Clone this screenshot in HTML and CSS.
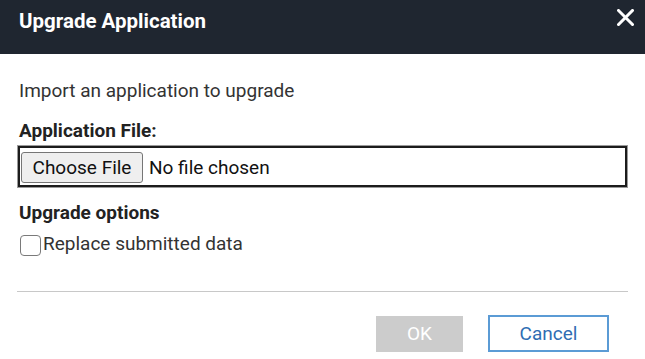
FILE: index.html
```html
<!DOCTYPE html>
<html lang="en">
<head>
<meta charset="utf-8">
<title>Upgrade Application</title>
<link rel="stylesheet" href="styles.css">
</head>
<body>
<div class="dialog">
  <div class="header">
    <div class="title">Upgrade Application</div>
    <svg class="close" width="17" height="17" viewBox="0 0 17 17" aria-label="Close">
      <path d="M1.5 1.5 L15.5 15.5 M15.5 1.5 L1.5 15.5" stroke="#ffffff" stroke-width="3" stroke-linecap="square"/>
    </svg>
  </div>
  <div class="content">
    <p class="intro">Import an application to upgrade</p>
    <div class="label label-file">Application File:</div>
    <div class="file-box">
      <span class="file-btn">Choose File</span>
      <span class="file-name">No file chosen</span>
    </div>
    <div class="label label-options">Upgrade options</div>
    <label class="check-row">
      <span class="checkbox"></span>
      <span class="check-text">Replace submitted data</span>
    </label>
    <div class="divider"></div>
    <div class="footer">
      <span class="btn btn-ok">OK</span>
      <span class="btn btn-cancel">Cancel</span>
    </div>
  </div>
</div>
</body>
</html>
```

FILE: styles.css
```css
html, body {
  margin: 0;
  padding: 0;
  background: #ffffff;
}

body {
  font-family: Roboto, "Liberation Sans", sans-serif;
  font-size: 19px;
  color: #333333;
}

.header {
  box-sizing: border-box;
  height: 54px;
  background: #1f2630;
  display: flex;
  justify-content: space-between;
  align-items: flex-start;
  padding: 9px 11px 0 19px;
}

.title {
  color: #ffffff;
  font-size: 20.5px;
  font-weight: 700;
  line-height: 24px;
}

.close {
  display: block;
}

.content {
  padding: 0 17px;
}

.intro {
  margin: 26px 0 0 2px;
  line-height: 21px;
}

.label {
  font-weight: 700;
  color: #222222;
  line-height: 21px;
  margin-left: 2px;
}

.label-file {
  margin-top: 19px;
}

.file-box {
  box-sizing: border-box;
  height: 43px;
  margin-top: 4px;
  border: 1px solid #9a9a9a;
  box-shadow: inset 0 0 0 2px #1c1c1c;
  display: flex;
  align-items: flex-start;
  padding: 6px 3px 0;
}

.file-btn {
  box-sizing: border-box;
  width: 122px;
  height: 31px;
  background: #efefef;
  border: 1px solid #767676;
  border-radius: 3px;
  color: #111111;
  display: flex;
  align-items: center;
  justify-content: center;
}

.file-name {
  margin-left: 6px;
  color: #111111;
  line-height: 31px;
}

.label-options {
  margin-top: 14px;
}

.check-row {
  display: flex;
  align-items: flex-start;
  margin-top: 10px;
  margin-left: 3px;
}

.checkbox {
  box-sizing: border-box;
  width: 21px;
  height: 21px;
  margin-top: 2px;
  border: 1px solid #7a7a7a;
  border-radius: 4px;
  background: #ffffff;
}

.check-text {
  margin-left: 2px;
  line-height: 21px;
}

.divider {
  height: 1px;
  background: #c8c8c8;
  margin-top: 35px;
}

.footer {
  display: flex;
  justify-content: flex-end;
  align-items: center;
  gap: 25px;
  margin-top: 23px;
  padding-right: 19px;
}

.btn {
  box-sizing: border-box;
  display: flex;
  align-items: center;
  justify-content: center;
  font-size: 19px;
}

.btn-ok {
  width: 87px;
  height: 36px;
  background: #cccccc;
  color: #ffffff;
}

.btn-cancel {
  width: 121px;
  height: 37px;
  border: 2px solid #5b9bd5;
  color: #2f6db3;
  background: #ffffff;
}
```
